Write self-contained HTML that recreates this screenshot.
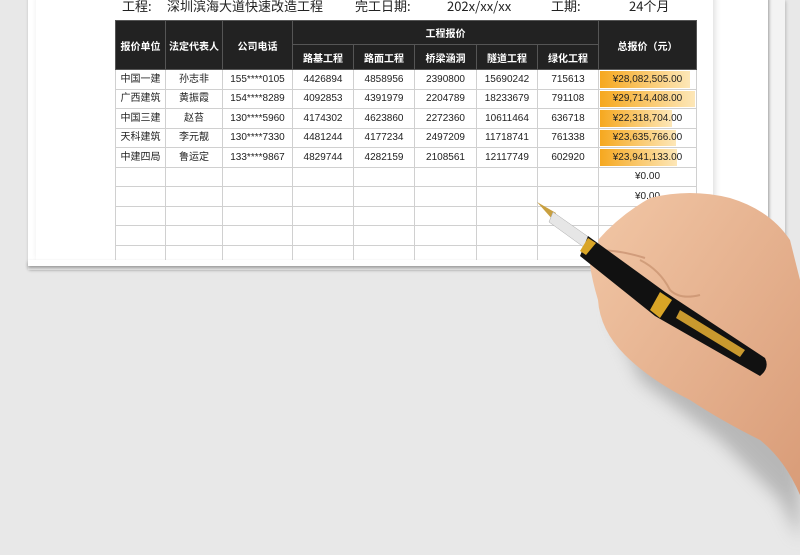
<!DOCTYPE html><html><head><meta charset="utf-8"><style>
body{margin:0;width:800px;height:555px;background:#e8e8e8;position:relative;overflow:hidden;font-family:"Liberation Sans","Noto Sans CJK SC",sans-serif}
.p3{position:absolute;left:745px;top:0;width:40px;height:280px;background:#f3f3f3;box-shadow:1px 1px 3px #bbb}
.p2{position:absolute;left:28px;top:-5px;width:740px;height:273px;background:#fff;box-shadow:1px 2px 3px #999}
.p1{position:absolute;left:36px;top:-5px;width:677px;height:265px;background:#fff;box-shadow:2px 0 6px #ddd}
.ttl{position:absolute;top:-2px;font-size:13px;line-height:16px;height:16px;color:#222;font-family:"Noto Sans CJK SC",sans-serif}
.wrap{position:absolute;left:115px;top:20px;width:590px;height:240px;overflow:hidden}
table{border-collapse:collapse;font-size:10px;color:#222;table-layout:fixed}
tr.r{height:19.5px}
td{border:1px solid #d0d0d0;text-align:center;padding:0;line-height:17px;height:17.5px;position:relative;overflow:hidden}
th{background:#222;color:#fff;border:1px solid #555;font-size:10px;font-weight:bold;padding:0}
.t{background:linear-gradient(90deg,#f6a81f,#fde7b8);}
td span{color:#222}
</style></head><body>
<div class="p3"></div><div class="p2"></div><div class="p1"></div>
<div class="ttl" style="left:122px">工程:</div>
<div class="ttl" style="left:167px">深圳滨海大道快速改造工程</div>
<div class="ttl" style="left:355px">完工日期:</div>
<div class="ttl" style="left:447px">202x/xx/xx</div>
<div class="ttl" style="left:551px">工期:</div>
<div class="ttl" style="left:629px">24个月</div>
<div class="wrap">
<table>
<colgroup><col width="50"><col width="57"><col width="70"><col width="61"><col width="61"><col width="62"><col width="61"><col width="61"><col width="98"></colgroup>
<tr style="height:24px"><th rowspan="2">报价单位</th><th rowspan="2">法定代表人</th><th rowspan="2">公司电话</th><th colspan="5">工程报价</th><th rowspan="2">总报价（元）</th></tr>
<tr style="height:25px"><th>路基工程</th><th>路面工程</th><th>桥梁涵洞</th><th>隧道工程</th><th>绿化工程</th></tr>
<tr class="r"><td>中国一建</td><td>孙志非</td><td>155****0105</td><td>4426894</td><td>4858956</td><td>2390800</td><td>15690242</td><td>715613</td><td><div class="t" style="position:absolute;left:1px;top:1px;bottom:1px;width:90px"></div><span style="position:relative">¥28,082,505.00</span></td></tr>
<tr class="r"><td>广西建筑</td><td>黄振霞</td><td>154****8289</td><td>4092853</td><td>4391979</td><td>2204789</td><td>18233679</td><td>791108</td><td><div class="t" style="position:absolute;left:1px;top:1px;bottom:1px;width:95px"></div><span style="position:relative">¥29,714,408.00</span></td></tr>
<tr class="r"><td>中国三建</td><td>赵苔</td><td>130****5960</td><td>4174302</td><td>4623860</td><td>2272360</td><td>10611464</td><td>636718</td><td><div class="t" style="position:absolute;left:1px;top:1px;bottom:1px;width:72px"></div><span style="position:relative">¥22,318,704.00</span></td></tr>
<tr class="r"><td>天科建筑</td><td>李元靓</td><td>130****7330</td><td>4481244</td><td>4177234</td><td>2497209</td><td>11718741</td><td>761338</td><td><div class="t" style="position:absolute;left:1px;top:1px;bottom:1px;width:76px"></div><span style="position:relative">¥23,635,766.00</span></td></tr>
<tr class="r"><td>中建四局</td><td>鲁运定</td><td>133****9867</td><td>4829744</td><td>4282159</td><td>2108561</td><td>12117749</td><td>602920</td><td><div class="t" style="position:absolute;left:1px;top:1px;bottom:1px;width:77px"></div><span style="position:relative">¥23,941,133.00</span></td></tr>
<tr class="r"><td></td><td></td><td></td><td></td><td></td><td></td><td></td><td></td><td>¥0.00</td></tr>
<tr class="r"><td></td><td></td><td></td><td></td><td></td><td></td><td></td><td></td><td>¥0.00</td></tr>
<tr class="r"><td></td><td></td><td></td><td></td><td></td><td></td><td></td><td></td><td></td></tr>
<tr class="r"><td></td><td></td><td></td><td></td><td></td><td></td><td></td><td></td><td></td></tr>
<tr class="r"><td></td><td></td><td></td><td></td><td></td><td></td><td></td><td></td><td></td></tr>
</table>
</div>
<div style="position:absolute;left:28px;top:261px;width:740px;height:9px;background:#e8e8e8"></div>
<div style="position:absolute;left:28px;top:260px;width:685px;height:6px;background:#fff;box-shadow:0 2px 3px #999"></div>
<svg style="position:absolute;left:0;top:0" width="800" height="555">
<defs><linearGradient id="sk" x1="0" y1="0" x2="1" y2="1"><stop offset="0" stop-color="#f2c7a6"/><stop offset="1" stop-color="#d99c78"/></linearGradient>
<filter id="sh"><feGaussianBlur stdDeviation="8"/></filter></defs>
<path d="M610 310 L640 380 L720 440 L780 500 L800 540 L800 440 Z" fill="#888" opacity=".5" filter="url(#sh)"/>
<path d="M598 240 Q620 215 650 198 Q690 188 730 198 Q770 210 790 240 L800 280 L800 495 Q785 460 760 440 Q720 420 690 400 Q650 380 625 355 Q600 330 598 300 Q592 280 590 265 Q592 252 600 250 Z" fill="url(#sk)"/>
<path d="M640 260 Q660 270 670 290 Q680 300 700 295" stroke="#c08866" stroke-width="2" fill="none" opacity=".6"/>
<path d="M596 250 Q620 250 645 258" stroke="#b57a5a" stroke-width="2" fill="none" opacity=".5"/>
<path d="M537 202 L556 213 L553 220 Z" fill="#c9a040"/>
<path d="M553 212 L590 238 L585 248 L549 222 Z" fill="#e6e6e6" stroke="#aaa" stroke-width=".5"/>
<path d="M588 236 L665 292 L765 358 Q770 368 760 376 L655 316 L580 256 Z" fill="#111"/>
<path d="M660 292 L672 300 L660 318 L650 310 Z" fill="#d9a526"/>
<path d="M680 310 L745 350 L740 357 L676 318 Z" fill="#c9992e"/>
<path d="M588 238 L596 243 L586 255 L580 251 Z" fill="#d9a526"/>
</svg>
</body></html>
